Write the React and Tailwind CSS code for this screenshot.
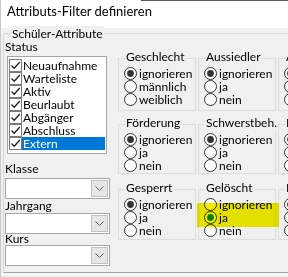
import React from 'react';

const statusItems = ['Neuaufnahme', 'Warteliste', 'Aktiv', 'Beurlaubt', 'Abgänger', 'Abschluss', 'Extern'];

const rows = [
  { h: 'h-[53px]', mt: 'mt-[17px]', groups: [
    { title: 'Geschlecht', options: ['ignorieren', 'männlich', 'weiblich'], sel: 0 },
    { title: 'Aussiedler', options: ['ignorieren', 'ja', 'nein'], sel: 0 },
    { title: 'Ausländer', options: ['ignorieren', 'ja', 'nein'], sel: 0 },
  ] },
  { h: 'h-[50px]', mt: 'mt-[13px]', groups: [
    { title: 'Förderung', options: ['ignorieren', 'ja', 'nein'], sel: 0 },
    { title: 'Schwerstbeh.', options: ['ignorieren', 'ja', 'nein'], sel: 0 },
    { title: 'Externe', options: ['ignorieren', 'ja', 'nein'], sel: 0 },
  ] },
  { h: 'h-[51px]', mt: 'mt-[15px]', groups: [
    { title: 'Gesperrt', options: ['ignorieren', 'ja', 'nein'], sel: 0 },
    { title: 'Gelöscht', options: ['ignorieren', 'ja', 'nein'], sel: 1, green: true },
    { title: 'Nachprüfung', options: ['ignorieren', 'ja', 'nein'], sel: 0 },
  ] },
];

function CheckBox() {
  return (
    <svg width="13" height="13" viewBox="0 0 13 13" className="shrink-0">
      <rect x="0.5" y="0.5" width="12" height="12" fill="#fff" stroke="#7a7a7a" />
      <path d="M2.5 6.5 L5.2 9.2 L10.8 3" fill="none" stroke="#222" strokeWidth="1.3" />
    </svg>
  );
}

function Radio({ checked, green }) {
  return (
    <svg width="13" height="13" viewBox="0 0 13 13" className="shrink-0">
      <circle cx="6.5" cy="6.5" r="6" fill="#fff" stroke="#333" />
      {checked && <circle cx="6.5" cy="6.5" r="3.4" fill={green ? '#0a8a0a' : '#333'} />}
    </svg>
  );
}

function Combo({ className }) {
  return (
    <div className={`w-[105px] h-[21px] bg-white border border-[#a6a6a6] flex items-center justify-end pr-[1px] ${className}`}>
      <div className="w-[17px] h-[17px] bg-[#e6e6e6] border border-[#c2c2c2] flex items-center justify-center">
        <svg width="9" height="5" viewBox="0 0 9 5">
          <path d="M0.5 0.5 L4.5 4.5 L8.5 0.5" fill="none" stroke="#606060" strokeWidth="1" />
        </svg>
      </div>
    </div>
  );
}

function Group({ title, options, sel, green }) {
  return (
    <div className="w-[78px] h-full shrink-0 border border-[#dcdcdc]">
      <div className="-mt-[9px] ml-[6px] w-fit px-[1px] bg-[#f0f0f0] leading-[14px] whitespace-nowrap">{title}</div>
      <div className="ml-[5px] mt-[3px] flex flex-col">
        {options.map((o, i) => (
          <div key={o} className="h-[13px] flex items-center gap-[2px] whitespace-nowrap">
            <Radio checked={i === sel} green={green} />
            <span className="leading-[13px]">{o}</span>
          </div>
        ))}
      </div>
    </div>
  );
}

export default function App() {
  return (
    <div className="relative w-[288px] h-[277px] overflow-hidden bg-[#f0f0f0] border-l border-[#c8c8c8] text-[12px] text-black font-['Lato','Liberation_Sans',sans-serif]">
      {/* Title bar */}
      <div className="h-[28px] bg-white pl-[6px] pt-[3px] text-[13px] leading-[17px]">
        Attributs-Filter definieren
      </div>
      <div className="absolute top-0 left-[140px] right-0 h-[1px] bg-[#5a5a5a]" />

      {/* Schüler-Attribute */}
      <div className="ml-[2px] mt-[5px] h-[240px] w-[300px] border border-[#d8d8d8] border-b-[#a8a8a8]">
        <div className="-mt-[8px] ml-[7px] w-fit px-[1px] bg-[#f0f0f0] leading-[15px]">Schüler-Attribute</div>
        <div className="flex">
          {/* Left column */}
          <div className="w-[105px] ml-[1px] shrink-0 flex flex-col">
            <div className="-mt-[1px] leading-[14px]">Status</div>
            <div className="mt-[2px] ml-[2px] w-[100px] h-[98px] bg-white border border-[#a6a6a6] pt-[2px] pl-[1px]">
              {statusItems.map((s, i) => (
                <div key={s} className="h-[13px] flex items-center">
                  <CheckBox />
                  <span className={`mr-[1px] flex-1 h-[13px] leading-[13px] pl-[1px] ${i === 6 ? 'bg-[#0078d7] text-white' : ''}`}>{s}</span>
                </div>
              ))}
            </div>
            <div className="mt-[8px] leading-[14px]">Klasse</div>
            <Combo className="mt-[2px]" />
            <div className="leading-[14px]">Jahrgang</div>
            <Combo />
            <div className="-mt-[2px] leading-[14px]">Kurs</div>
            <Combo className="-mt-[1px]" />
          </div>

          {/* Right grid */}
          <div className="ml-[8px] flex flex-col">
            {rows.map((r, ri) => (
              <div key={ri} className={`flex gap-[2px] ${r.h} ${r.mt}`}>
                {r.groups.map(g => <Group key={g.title} {...g} />)}
              </div>
            ))}
          </div>
        </div>
      </div>
      <div className="mt-[1px] h-[1px] bg-white" />

      {/* highlighter mark */}
      <div className="absolute left-[196px] top-[203px] w-[82px] h-[24px] bg-[#f2ee00] mix-blend-multiply" />
    </div>
  );
}
